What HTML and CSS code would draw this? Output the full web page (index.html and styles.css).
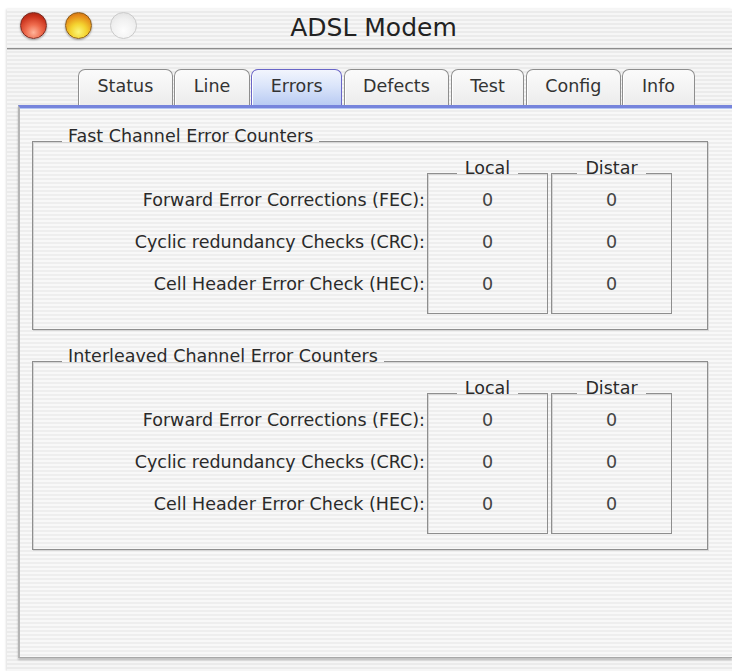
FILE: index.html
```html
<!DOCTYPE html>
<html>
<head>
<meta charset="utf-8">
<title>ADSL Modem</title>
<link rel="stylesheet" href="styles.css">
</head>
<body>
<div class="window">
  <div class="titlebar">
    <div class="lights">
      <span class="light red"></span>
      <span class="light yellow"></span>
      <span class="light off"></span>
    </div>
    <div class="title">ADSL Modem</div>
    <div></div>
  </div>
  <div class="content">
    <div class="tabs">
      <div class="tab">Status</div>
      <div class="tab">Line</div>
      <div class="tab selected">Errors</div>
      <div class="tab">Defects</div>
      <div class="tab">Test</div>
      <div class="tab">Config</div>
      <div class="tab">Info</div>
    </div>
    <div class="panel">
      <fieldset class="group">
        <legend>Fast Channel Error Counters</legend>
        <div class="counters">
          <div class="labels">
            <div class="row">Forward Error Corrections (FEC):</div>
            <div class="row">Cyclic redundancy Checks (CRC):</div>
            <div class="row">Cell Header Error Check (HEC):</div>
          </div>
          <fieldset class="col">
            <legend>Local</legend>
            <div class="row">0</div>
            <div class="row">0</div>
            <div class="row">0</div>
          </fieldset>
          <fieldset class="col">
            <legend>Distar</legend>
            <div class="row">0</div>
            <div class="row">0</div>
            <div class="row">0</div>
          </fieldset>
        </div>
      </fieldset>
      <fieldset class="group second">
        <legend>Interleaved Channel Error Counters</legend>
        <div class="counters">
          <div class="labels">
            <div class="row">Forward Error Corrections (FEC):</div>
            <div class="row">Cyclic redundancy Checks (CRC):</div>
            <div class="row">Cell Header Error Check (HEC):</div>
          </div>
          <fieldset class="col">
            <legend>Local</legend>
            <div class="row">0</div>
            <div class="row">0</div>
            <div class="row">0</div>
          </fieldset>
          <fieldset class="col">
            <legend>Distar</legend>
            <div class="row">0</div>
            <div class="row">0</div>
            <div class="row">0</div>
          </fieldset>
        </div>
      </fieldset>
    </div>
  </div>
</div>
</body>
</html>
```
FILE: styles.css
```css
html, body {
  margin: 0;
  padding: 0;
  background: #ffffff;
}
body {
  font-family: "DejaVu Sans", "Liberation Sans", sans-serif;
  color: #2a2a2a;
  overflow: hidden;
}
.window {
  margin: 9px 0 0 7px;
  height: 662px;
  background: repeating-linear-gradient(to bottom, #f6f6f6 0 2px, #ebebeb 2px 4px);
  box-shadow: -1px 0 2px rgba(0, 0, 0, 0.12);
}
.titlebar {
  height: 39px;
  display: grid;
  grid-template-columns: 1fr auto 1fr;
  align-items: center;
  border-bottom: 1px solid #8d8d8d;
  box-shadow: 0 1px 0 #d0d0d0;
}
.lights {
  display: flex;
  gap: 18px;
  padding-left: 13px;
  margin-bottom: 7px;
}
.light {
  width: 27px;
  height: 27px;
  border-radius: 50%;
  box-sizing: border-box;
}
.light.red {
  background: radial-gradient(circle at 50% 78%, #ffb49a 0, #ee6a4c 35%, #c9321c 70%, #8e1a0c 100%);
  border: 1px solid #7a2a20;
  box-shadow: 0 1px 2px rgba(0, 0, 0, 0.35);
}
.light.yellow {
  background: radial-gradient(circle at 50% 75%, #fbf67a 0, #f4d430 35%, #e58a18 72%, #b55a0c 100%);
  border: 1px solid #8a5a18;
  box-shadow: 0 1px 2px rgba(0, 0, 0, 0.35);
}
.light.off {
  background: radial-gradient(circle at 50% 70%, #fdfdfd 0, #f0f0f0 55%, #dcdcdc 100%);
  border: 1px solid #cacaca;
}
.title {
  font-size: 25px;
  color: #222;
  margin-bottom: 3px;
  padding-left: 8px;
}
.content {
  padding-left: 11px;
}
.tabs {
  display: flex;
  gap: 1.5px;
  margin-top: 19px;
  padding-left: 60px;
  height: 37px;
  align-items: flex-end;
}
.tab {
  height: 36px;
  box-sizing: border-box;
  padding: 0 18.5px;
  font-size: 17.5px;
  line-height: 33px;
  color: #333;
  border: 1px solid #8e8e8e;
  border-bottom: none;
  border-radius: 7px 7px 0 0;
  background: linear-gradient(to bottom, #fbfbfb, #ececec);
  box-shadow: inset 1px 0 0 #ffffff;
}
.tab.selected {
  border-color: #6a66c8;
  background: linear-gradient(to bottom, #f2f5fd 0, #dbe5fa 45%, #b9cbf3 100%);
}
.panel {
  height: 553px;
  box-sizing: border-box;
  border-top: 3px solid #7684dc;
  border-left: 2px solid #b5b5b5;
  border-bottom: 1px solid #a8a8a8;
  background: repeating-linear-gradient(to bottom, #f8f8f8 0 2px, #eeeeee 2px 4px);
  box-shadow: inset 0 1px 0 #b4c6f2, 0 2px 2px rgba(0, 0, 0, 0.22);
  padding-top: 18px;
}
.group {
  margin: 0 24px 0 12px;
  padding: 0 0 15px 0;
  border: 1px solid #8e8e8e;
  box-shadow: inset 1px 1px 0 #d6d6d6, 1px 1px 0 #d6d6d6;
  min-width: 0;
}
.group.second {
  margin-top: 16px;
}
.group > legend {
  font-size: 17.5px;
  line-height: 20px;
  margin-left: 29px;
  padding: 0 6px 10px;
  color: #2a2a2a;
}
.counters {
  display: flex;
  margin-top: 5px;
  margin-right: 35px;
}
.labels {
  flex: 1;
  padding-top: 24px;
  margin-right: 2px;
  text-align: right;
}
.row {
  height: 42px;
  line-height: 30px;
  font-size: 17.5px;
}
.col {
  width: 121px;
  box-sizing: border-box;
  margin: 0;
  padding: 0 0 2px 0;
  border: 1px solid #8e8e8e;
  box-shadow: inset 1px 1px 0 #d6d6d6;
  text-align: center;
  min-width: 0;
}
.col + .col {
  margin-left: 3px;
}
.col > legend {
  font-size: 17.5px;
  line-height: 14px;
  margin: 0 auto;
  padding: 0 8px 10px;
  color: #2a2a2a;
}
.col .row {
  color: #444;
}
```
